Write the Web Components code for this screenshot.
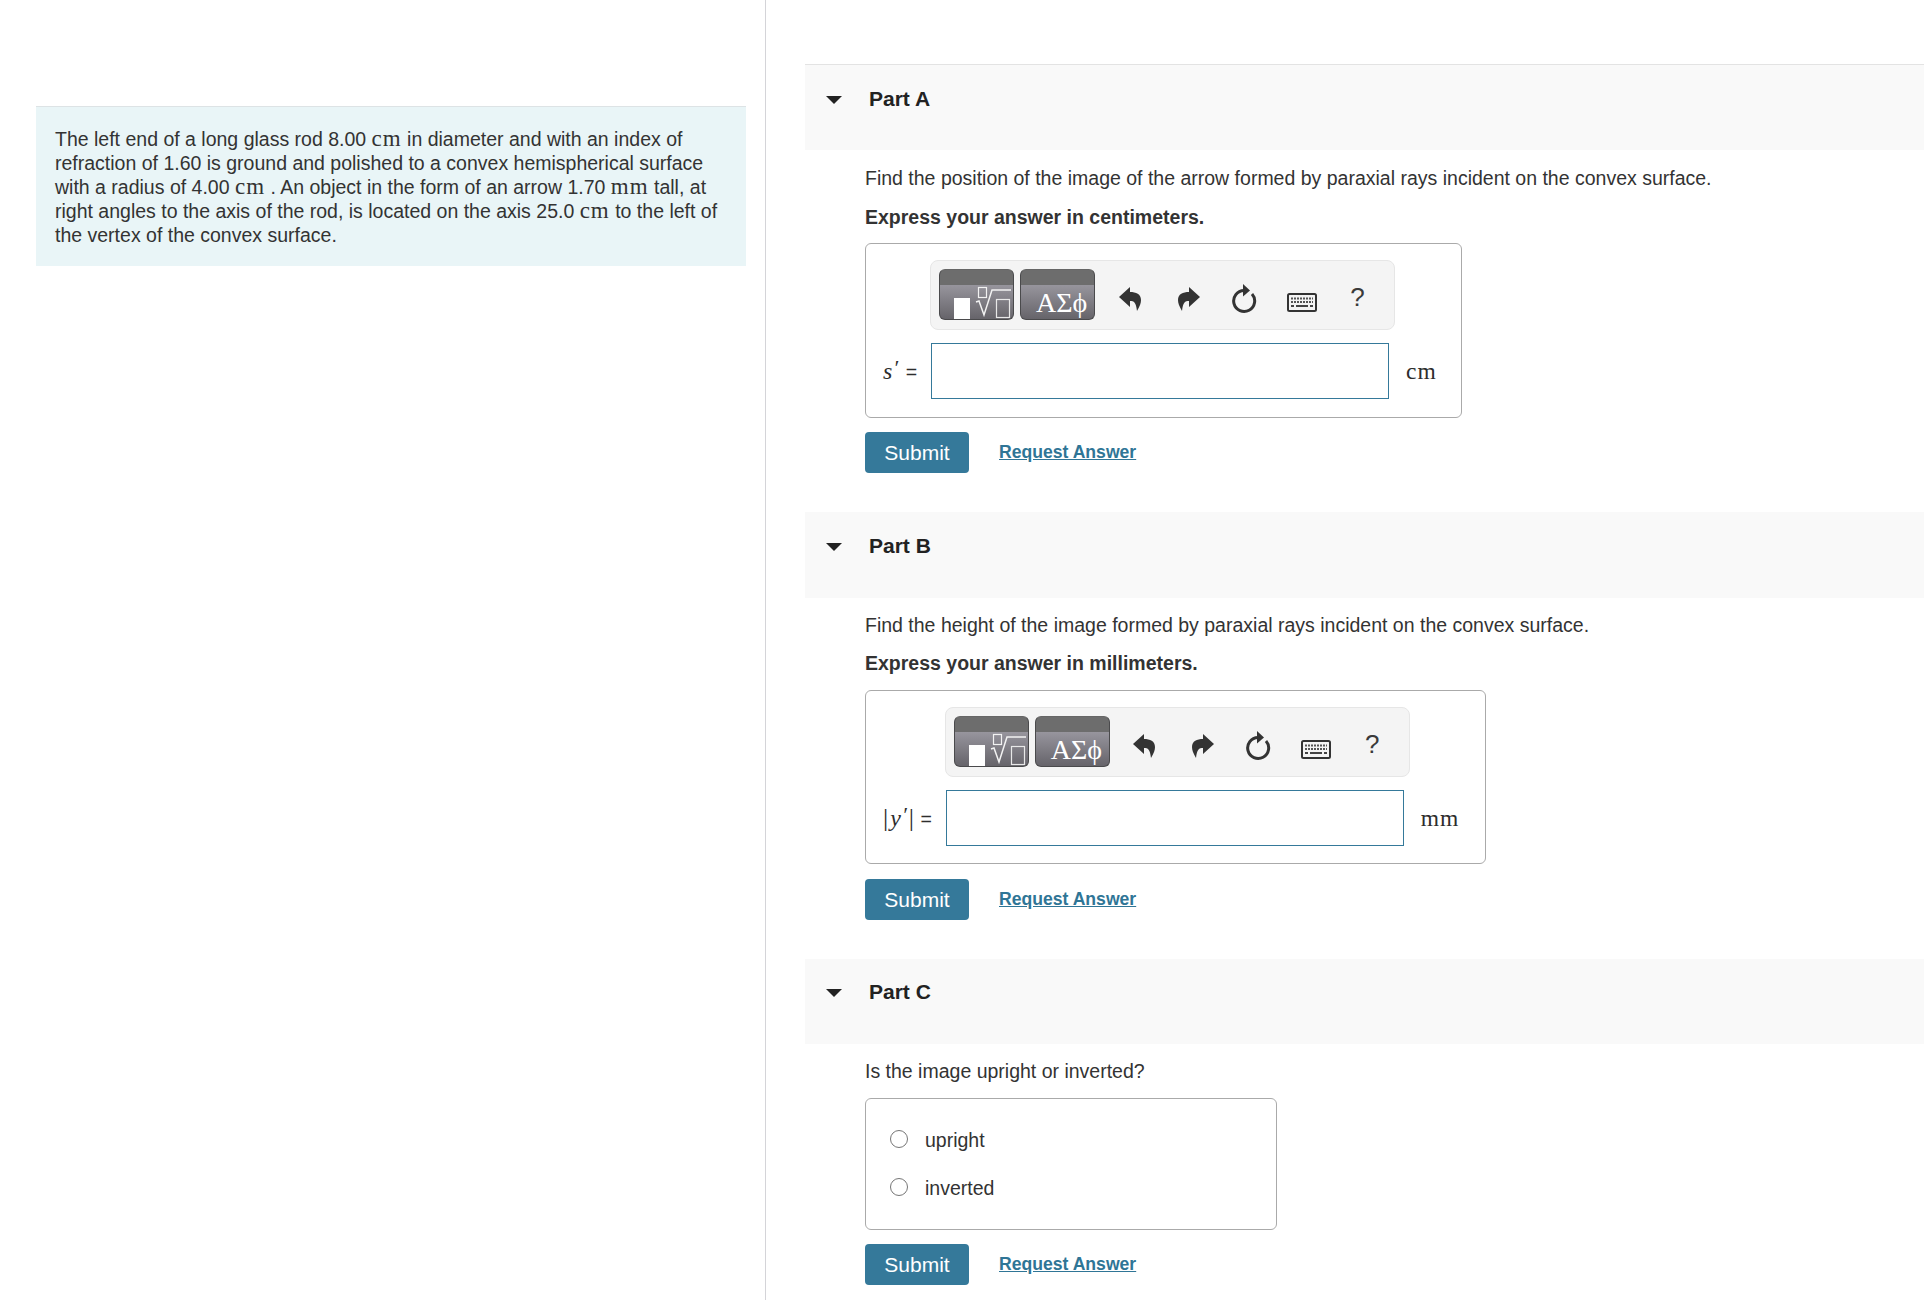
<!DOCTYPE html>
<html lang="en">
<head>
<meta charset="utf-8">
<title>Part A</title>
<style>
  html, body { margin: 0; padding: 0; background: #fff; }
  body { font-family: "Liberation Sans", Arial, sans-serif; color: #333; font-size: 19.5px; line-height: 24px; overflow: hidden; height: 1300px; }
  .u { font-family: "Liberation Serif", serif; font-size: 23px; letter-spacing: 1px; line-height: 0; }
</style>
</head>
<body>
<problem-layout>
  <intro-panel slot="left">The left end of a long glass rod 8.00 <span class="u">cm</span> in diameter and with an index of<br>refraction of 1.60 is ground and polished to a convex hemispherical surface<br>with a radius of 4.00 <span class="u">cm</span> . An object in the form of an arrow 1.70 <span class="u">mm</span> tall, at<br>right angles to the axis of the rod, is located on the axis 25.0 <span class="u">cm</span> to the left of<br>the vertex of the convex surface.</intro-panel>

  <part-section title="Part A" style="--head-line: #e3e3e3">
    <span slot="prompt">Find the position of the image of the arrow formed by paraxial rays incident on the convex surface.</span>
    <span slot="hint">Express your answer in centimeters.</span>
    <answer-box unit="cm" var="s" style="--pad-r: 24px"></answer-box>
  </part-section>

  <part-section title="Part B" style="--head-pad: 21px; --body-pad: 15px; --prompt-gap: 14px; --hint-gap: 15px; --actions-gap: 15px">
    <span slot="prompt">Find the height of the image formed by paraxial rays incident on the convex surface.</span>
    <span slot="hint">Express your answer in millimeters.</span>
    <answer-box unit="mm" var="y" abs style="--pad-b: 17px; --pad-r: 26px"></answer-box>
  </part-section>

  <part-section title="Part C" style="--head-h: 85px; --head-pad: 20px; --body-pad: 15px">
    <span slot="prompt">Is the image upright or inverted?</span>
    <radio-box>
      <radio-option>upright</radio-option>
      <radio-option>inverted</radio-option>
    </radio-box>
  </part-section>
</problem-layout>

<script>
class ProblemLayout extends HTMLElement {
  constructor() {
    super();
    this.attachShadow({ mode: "open" });
    this.shadowRoot.innerHTML = `
      <style>
        :host { display: flex; width: 1924px; height: 1300px; overflow: hidden; }
        .left { width: 765px; flex: none; border-right: 1px solid #d4d4d8; padding-top: 106px; }
        .right { flex: 1; padding: 64px 0 0 39px; min-width: 0; }
      </style>
      <div class="left"><slot name="left"></slot></div>
      <div class="right"><slot></slot></div>
    `;
  }
}
customElements.define("problem-layout", ProblemLayout);

class IntroPanel extends HTMLElement {
  constructor() {
    super();
    this.attachShadow({ mode: "open" });
    this.shadowRoot.innerHTML = `
      <style>
        :host { display: block; margin-left: 36px; width: 710px; box-sizing: border-box; padding: 20px 19px 19px; background: #e9f5f7; border-top: 1px solid #dde3e5; }
      </style>
      <slot></slot>
    `;
  }
}
customElements.define("intro-panel", IntroPanel);

class PartSection extends HTMLElement {
  constructor() {
    super();
    this.attachShadow({ mode: "open" });
    const title = this.getAttribute("title") || "";
    this.shadowRoot.innerHTML = `
      <style>
        :host { display: block; padding-bottom: 39px; }
        :host(:last-of-type) { padding-bottom: 15px; }
        header { background: #f9f9f9; border-top: 1px solid var(--head-line, #f9f9f9); display: flex; padding-top: var(--head-pad, 22px); box-sizing: border-box; height: var(--head-h, 86px); }
        .caret { width: 0; height: 0; margin: 9px 0 0 21px; border: 8px solid transparent; border-top: 8px solid #222; border-bottom: 0; }
        h2 { margin: 0 0 0 27px; font-size: 21px; line-height: 24px; font-weight: bold; color: #222; }
        .body { padding: var(--body-pad, 16px) 0 0 60px; }
        .prompt { margin-bottom: var(--prompt-gap, 15px); }
        .hint { font-weight: bold; margin-bottom: var(--hint-gap, 14px); }
        .actions { display: flex; align-items: center; margin-top: var(--actions-gap, 14px); }
        button { width: 104px; height: 41px; border: 0; border-radius: 4px; background: #35799a; color: #fff; font: 21px/41px "Liberation Sans", Arial, sans-serif; padding: 0; }
        a { margin: 0 0 2px 30px; color: #2f7596; font-size: 17.6px; font-weight: bold; text-decoration: underline; }
      </style>
      <header><span class="caret"></span><h2>${title}</h2></header>
      <div class="body">
        <div class="prompt"><slot name="prompt"></slot></div>
        <div class="hint"><slot name="hint"></slot></div>
        <slot></slot>
        <div class="actions"><button type="button">Submit</button><a href="#">Request Answer</a></div>
      </div>
    `;
  }
}
customElements.define("part-section", PartSection);

class MathToolbar extends HTMLElement {
  constructor() {
    super();
    this.attachShadow({ mode: "open" });
    this.shadowRoot.innerHTML = `
      <style>
        :host { display: flex; width: 465px; height: 70px; box-sizing: border-box; align-items: flex-start; padding: 8px 0 0 8px; background: #f4f4f4; border: 1px solid #e6e6e6; border-radius: 8px; margin-left: -1px; }
        .tpl { position: relative; overflow: hidden; width: 75px; height: 51px; margin-right: 6px; box-sizing: border-box; border: 1px solid #4a4a4c; border-top-color: #666; border-radius: 6px; background: linear-gradient(#6d6d6d 0, #6d6d6d 15px, #97959d 15px, #66646a 100%); }
        .tpl svg { position: absolute; left: -1px; top: -1px; }
        .greek { font: 28px/1 "Liberation Serif", serif; color: #fff; position: absolute; left: 15px; top: 19px; white-space: nowrap; }
        .tool { width: 57px; height: 59px; flex: none; display: flex; align-items: center; justify-content: center; color: #333; }
        .help { font-size: 26px; font-family: "Liberation Sans", Arial, sans-serif; line-height: 1; color: #3a3a3a; position: relative; top: -2px; }
      </style>
      <div class="tpl">
        <svg width="75" height="51" viewBox="0 0 75 51" fill="none">
          <rect x="15" y="29" width="16" height="22" fill="#fff"/>
          <rect x="39.5" y="18.5" width="8" height="10" stroke="#f2f2f2" stroke-width="1.2"/>
          <path d="M37 33l3-1 5 14 8-25h19" stroke="#f2f2f2" stroke-width="1.5"/>
          <rect x="57.5" y="30.5" width="13" height="18" stroke="#e8e8e8" stroke-width="1.2"/>
        </svg>
      </div>
      <div class="tpl"><span class="greek">ΑΣϕ</span></div>
      <div class="tool">
        <svg width="22" height="24" viewBox="0 0 22 24" fill="#333"><path d="M11 0 0 10l11 10v-6c4 0 6 1 7 10 3-5 4-8 4-11 0-6-5-8-11-8z"/></svg>
      </div>
      <div class="tool">
        <svg width="22" height="24" viewBox="0 0 22 24" fill="#333" style="margin-left:4px"><path d="M11 0l11 10-11 10v-6c-4 0-6 1-7 10-3-5-4-8-4-11 0-6 5-8 11-8z"/></svg>
      </div>
      <div class="tool">
        <svg width="26" height="30" viewBox="0 0 26 30" fill="none"><path d="M13 6.5A10.5 10.5 0 1 0 21 10" stroke="#333" stroke-width="3"/><path d="M12 0l7 6.5-7 6z" fill="#333"/></svg>
      </div>
      <div class="tool">
        <svg width="30" height="19" viewBox="0 0 30 19" fill="none" style="margin:7px 0 0 2px">
          <rect x="1" y="1" width="28" height="17" rx="1.5" fill="#f4f4f4" stroke="#333" stroke-width="2"/>
          <path d="M4 5.5h22M4 9h22" stroke="#555" stroke-width="2" stroke-dasharray="2 1"/>
          <path d="M4 13h3M9 13h12M23 13h3" stroke="#444" stroke-width="2"/>
        </svg>
      </div>
      <div class="tool"><span class="help">?</span></div>
    `;
  }
}
customElements.define("math-toolbar", MathToolbar);

class AnswerBox extends HTMLElement {
  constructor() {
    super();
    this.attachShadow({ mode: "open" });
    const unit = this.getAttribute("unit");
    const name = this.getAttribute("var");
    const abs = this.hasAttribute("abs");
    this.shadowRoot.innerHTML = `
      <style>
        :host { display: inline-grid; vertical-align: top; grid-template-columns: auto 458px auto; align-items: center; padding: 16px var(--pad-r, 25px) var(--pad-b, 18px) 17px; border: 1px solid #aaa; border-radius: 6px; row-gap: 13px; }
        math-toolbar { grid-column: 2; }
        .label { grid-column: 1; font: 22px/24px "Liberation Serif", serif; color: #2d2d2d; padding-right: 14px; white-space: nowrap; }
        .label i { font-size: 24px; }
        .prime { font-size: 22px; margin: 0 1px; position: relative; top: -4px; font-style: italic; }
        .bar { font-size: 26px; }
        .bar.open { margin-right: 2px; }
        .bar.close { margin-left: 1px; }
        .eq { font-family: "Liberation Sans", Arial, sans-serif; font-size: 19.5px; margin-left: 6.5px; }
        .input { height: 56px; box-sizing: border-box; border: 1.5px solid #35799a; background: #fff; }
        .unit { font: 23.5px/24px "Liberation Serif", serif; letter-spacing: 1px; margin-left: 17px; color: #2d2d2d; }
      </style>
      <math-toolbar></math-toolbar>
      <span class="label">${abs ? '<span class="bar open">|</span>' : ""}<i>${name}</i><span class="prime">′</span>${abs ? '<span class="bar close">|</span>' : ""}<span class="eq">=</span></span>
      <div class="input"></div>
      <span class="unit">${unit}</span>
    `;
  }
}
customElements.define("answer-box", AnswerBox);

class RadioBox extends HTMLElement {
  constructor() {
    super();
    this.attachShadow({ mode: "open" });
    this.shadowRoot.innerHTML = `
      <style>
        :host { display: flex; flex-direction: column; gap: 24px; width: 412px; box-sizing: border-box; height: 132px; padding: 29px 24px 0; margin-top: 15px; border: 1px solid #aaa; border-radius: 6px; }
      </style>
      <slot></slot>
    `;
  }
}
customElements.define("radio-box", RadioBox);

class RadioOption extends HTMLElement {
  constructor() {
    super();
    this.attachShadow({ mode: "open" });
    this.shadowRoot.innerHTML = `
      <style>
        :host { display: flex; align-items: center; height: 24px; }
        .dot { width: 18px; height: 18px; box-sizing: border-box; border: 1.5px solid #767676; border-radius: 50%; background: #fff; margin-right: 17px; position: relative; top: -1px; }
      </style>
      <span class="dot"></span><slot></slot>
    `;
  }
}
customElements.define("radio-option", RadioOption);
</script>
</body>
</html>
